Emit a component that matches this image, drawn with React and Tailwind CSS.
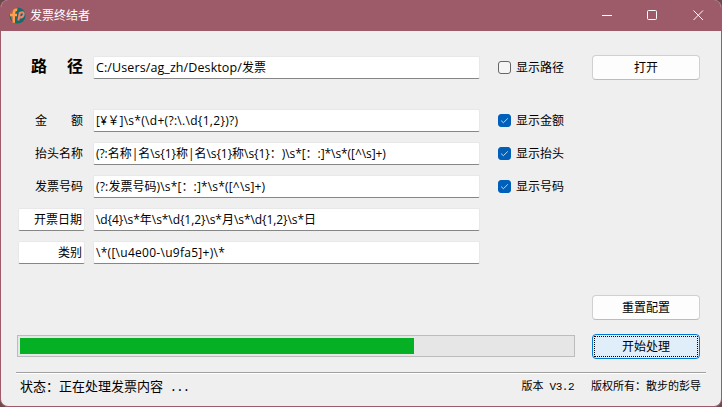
import React from "react";

const UI = "font-['Open_Sans','Noto_Sans_CJK_SC',sans-serif]";
const SONG = "font-['Liberation_Mono','Noto_Sans_CJK_SC',monospace]";

// Splits a string so Latin runs and Chinese runs can be spaced separately.
function Mixed({ text, latin }) {
  return text.split(/([\u2e80-\u9fff\uff00-\uffef]+)/).map((part, i) =>
    i % 2 ? (
      <span key={i}>{part}</span>
    ) : (
      <span key={i} className={latin}>
        {part}
      </span>
    )
  );
}

function Field({ children, className = "" }) {
  return (
    <div className={`h-[23px] shrink-0 whitespace-pre rounded-[2px] border border-[#e8e8e8] border-b-[#868686] bg-white text-[12px] leading-[22px] ${className}`}>
      {children}
    </div>
  );
}

function Check({ checked, label }) {
  return (
    <div className="ml-[18px] flex items-center">
      <span className={`flex h-[13px] w-[13px] items-center justify-center rounded-[3px] border ${checked ? "border-[#005fb8] bg-[#005fb8]" : "border-[#666666] bg-[#f5f5f5]"}`}>
        {checked && (
          <svg width="9" height="9" viewBox="0 0 9 9" fill="none" stroke="#d5e6f5" strokeWidth="0.9">
            <path d="M1.2 4.7 L3.4 6.7 L7.8 2.4" />
          </svg>
        )}
      </span>
      <span className="ml-[5px] text-[12px] leading-[22px]">{label}</span>
    </div>
  );
}

function Button({ children, className = "" }) {
  return (
    <button className={`h-[25px] w-[108px] shrink-0 rounded-[4px] border border-[#d0d0d0] border-b-[#bcbcbc] bg-[#fdfdfd] text-[12px] leading-[22px] ${className}`}>
      {children}
    </button>
  );
}

const rows = [
  { label: "金　　额", value: "[¥￥]\\s*(\\d+(?:\\.\\d{1,2})?)", check: "显示金额", latin: "tracking-[0.3px]" },
  { label: "抬头名称", value: "(?:名称|名\\s{1}称|名\\s{1}称\\s{1}：)\\s*[：:]*\\s*([^\\s]+)", check: "显示抬头", latin: "tracking-[-0.07px]" },
  { label: "发票号码", value: "(?:发票号码)\\s*[：:]*\\s*([^\\s]+)", check: "显示号码", latin: "tracking-[0.18px]" },
  { label: "开票日期", value: "\\d{4}\\s*年\\s*\\d{1,2}\\s*月\\s*\\d{1,2}\\s*日", boxed: true, latin: "tracking-[-0.07px]" },
  { label: "类别", value: "\\*([\\u4e00-\\u9fa5]+)\\*", boxed: true, latin: "tracking-[0.28px]" },
];

export default function App() {
  return (
    <div className="h-[407px] w-[722px] overflow-hidden bg-[#6b4a4e]">
      <div className={`flex h-full w-full flex-col overflow-hidden rounded-[8px] border border-t-0 border-[#9d5b69] bg-[#efefef] text-black [text-spacing-trim:space-all] ${UI}`}>
        <header className="flex h-[31px] shrink-0 items-center bg-[#9d5b69] pl-[8px] text-white">
          <svg width="17" height="17" viewBox="0 0 17 17">
            <circle cx="8.5" cy="8.5" r="8" fill="#176b68" />
            <path d="M0.8 6 A8 8 0 0 1 9 0.5 L6 8 L6 16 A8 8 0 0 1 3 14 Z" fill="#b5604f" />
            <path d="M4.8 15.8 V6 Q4.8 2.5 8.2 2.7 M1 8 H8" fill="none" stroke="#ffa04e" strokeWidth="2.4" />
            <path d="M9.3 13.5 L10.8 6 Q15.4 4 14.6 8 Q13.8 11 10.5 10.2" fill="none" stroke="#f98070" strokeWidth="2" />
          </svg>
          <span className="ml-[4px] text-[12px] leading-[30px]">发票终结者</span>
          <svg className="ml-auto mr-[17px]" width="102" height="11" viewBox="0 0 102 11" fill="none" stroke="white">
            <path d="M0 5.5 H10" />
            <rect x="45.5" y="0.5" width="9" height="9" rx="1" />
            <path d="M91.5 0.5 L101 10 M101 0.5 L91.5 10" />
          </svg>
        </header>

        <main className="flex flex-col pt-[24px]">
          <div className="flex h-[25px] items-center">
            <span className={`flex w-[82px] justify-between pl-[30px] pt-[2px] text-[16px] font-bold leading-[25px] ${SONG}`}>
              <span>路</span>
              <span>径</span>
            </span>
            <Field className="ml-[10px] w-[387px] pl-[2px]">
              <Mixed text="C:/Users/ag_zh/Desktop/发票" latin="text-[12.5px] tracking-[0.1px]" />
            </Field>
            <Check label="显示路径" />
            <Button className="ml-auto mr-[21px]">打开</Button>
          </div>

          <div className="mt-[29px] flex flex-col gap-[10px]">
            {rows.map((r) => (
              <div key={r.label} className="flex h-[23px] items-center">
                {r.boxed ? (
                  <Field className="ml-[17px] w-[67px] pr-[2px] text-right">{r.label}</Field>
                ) : (
                  <span className="w-[84px] whitespace-pre pr-[2px] text-right text-[12px] leading-[23px]">{r.label}</span>
                )}
                <Field className="ml-[8px] w-[387px] pl-[2px]">
                  <Mixed text={r.value} latin={r.latin} />
                </Field>
                {r.check && <Check checked label={r.check} />}
              </div>
            ))}
          </div>

          <Button className="ml-auto mr-[21px] mt-[31px]">重置配置</Button>

          <div className="mt-[14px] flex items-start justify-between pl-[16px] pr-[21px]">
            <div className="mt-px h-[22px] w-[558px] border border-[#bcbcbc] bg-[#e6e6e6] p-[2px]">
              <div className="h-[16px] w-[394px] bg-[#06b025]" />
            </div>
            <button className="h-[25px] w-[108px] rounded-[4px] border border-[#0078d4] bg-[#e0eef9] p-px text-[12px] leading-[19px]">
              <span className="block h-full border border-dotted border-black">开始处理</span>
            </button>
          </div>
        </main>

        <footer className={`ml-[15px] mt-[13px] flex h-[30px] w-[690px] items-center whitespace-pre border-t border-[#a0a0a0] shadow-[inset_0_1px_0_#ffffff] ${SONG}`}>
          <span className="pl-[4px] text-[13px]">
            <Mixed text="状态：正在处理发票内容 ..." latin="tracking-[-1.3px]" />
          </span>
          <span className="ml-auto text-[11px]">
            <Mixed text="版本 V3.2" latin="tracking-[-0.5px]" />
          </span>
          <span className="ml-[17px] mr-[5px] text-[11px]">版权所有：散步的彭导</span>
        </footer>
      </div>
    </div>
  );
}
